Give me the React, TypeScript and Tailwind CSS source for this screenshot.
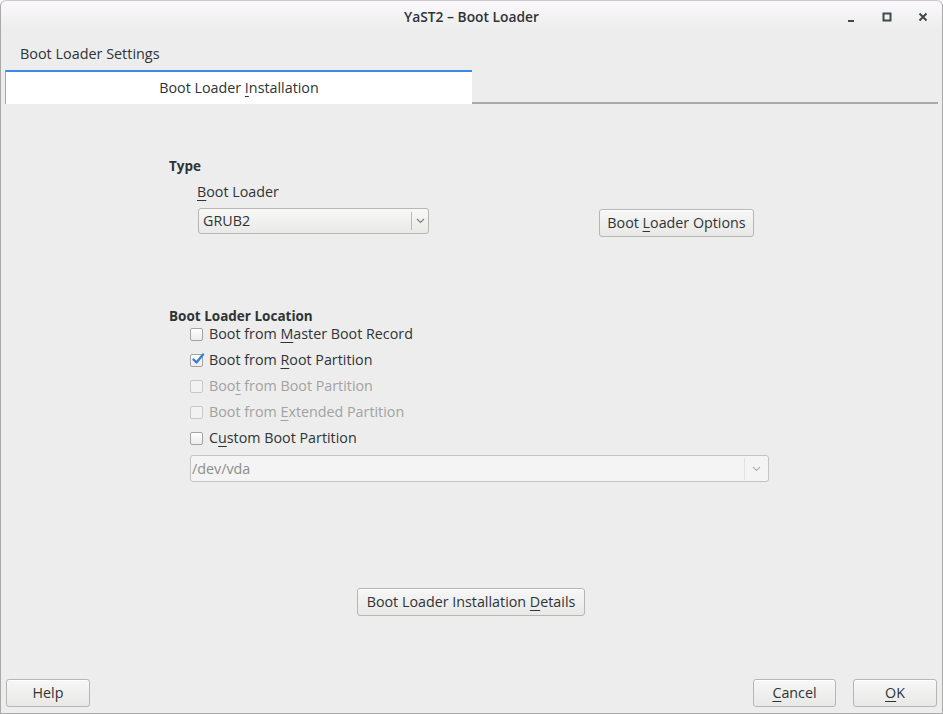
import React from "react";

const font = { fontFamily: '"Open Sans", "Noto Sans", sans-serif' };

function Mn({ children }: { children: React.ReactNode }) {
  return <span className="underline underline-offset-[3px] decoration-1">{children}</span>;
}

function Button({ children, className = "" }: { children: React.ReactNode; className?: string }) {
  return (
    <button
      className={`h-[28px] whitespace-nowrap rounded-[3px] border border-[#b6b6b3] bg-gradient-to-b from-[#f7f7f7] to-[#e8e8e7] px-0 text-[14.3px] text-[#2e3436] shadow-[inset_0_1px_0_#ffffff] ${className}`}
    >
      {children}
    </button>
  );
}

function Chevron({ color = "#7c7f7c" }: { color?: string }) {
  return (
    <svg width="9" height="6" viewBox="0 0 9 6">
      <path d="M1 1 L4.5 4.5 L8 1" fill="none" stroke={color} strokeWidth="1.2" />
    </svg>
  );
}

function Check({ label, checked = false, disabled = false }: { label: React.ReactNode; checked?: boolean; disabled?: boolean }) {
  return (
    <div className="flex h-[26px] items-center">
      <div
        className={`relative h-[13px] w-[13px] rounded-[2px] border ${
          disabled ? "border-[#c8c8c6] bg-[#f2f2f2]" : "border-[#a3a3a1] bg-gradient-to-b from-[#ffffff] to-[#ececec]"
        }`}
      >
        {checked && (
          <svg className="absolute left-[0px] top-[-3px]" width="14" height="14" viewBox="0 0 14 14">
            <path d="M2.5 7.5 L5.5 10.5 L12 2.5" fill="none" stroke="#3a7fd0" strokeWidth="2.4" strokeLinecap="round" strokeLinejoin="round" />
          </svg>
        )}
      </div>
      <span className={`ml-[6px] text-[14.3px] ${disabled ? "text-[#a1a3a0]" : "text-[#2e3436]"}`}>{label}</span>
    </div>
  );
}

export default function App() {
  return (
    <div style={font} className="flex h-[714px] w-[943px] flex-col overflow-hidden rounded-t-[6px] border border-t-0 border-[#a9a9a9] bg-[#ededed] text-[#2e3436]">
      {/* title bar */}
      <div className="relative flex h-[33px] shrink-0 items-center justify-center rounded-t-[6px] border-t border-[#c9c9c9] bg-gradient-to-b from-[#fbf8fb] to-[#ececec]">
        <span className="text-[13.8px] font-semibold text-[#2e3436]">YaST2 – Boot Loader</span>
        <div className="absolute right-[14px] top-[10px] flex items-center gap-[26px]">
          <svg width="10" height="12" viewBox="0 0 10 12"><rect x="2" y="9" width="6" height="2" fill="#3f4a4d" /></svg>
          <svg width="10" height="12" viewBox="0 0 10 12"><rect x="1.5" y="2.5" width="7" height="7" fill="none" stroke="#3f4a4d" strokeWidth="2" /></svg>
          <svg width="10" height="12" viewBox="0 0 10 12"><path d="M1.5 2.5 L8.5 9.5 M8.5 2.5 L1.5 9.5" stroke="#3f4a4d" strokeWidth="2" /></svg>
        </div>
      </div>

      {/* header */}
      <div className="pl-[19px] pt-[11px] text-[14.4px] leading-[20px]">Boot Loader Settings</div>

      {/* tab bar */}
      <div className="mt-[6px] flex pl-[4px] pr-[4px]">
        <div className="flex h-[34px] w-[467px] items-center justify-center border-l border-[#a6a6a6] border-t-2 border-t-[#3b8ae0] bg-white text-[14.3px]">
          <span>
            Boot Loader <Mn>I</Mn>nstallation
          </span>
        </div>
        <div className="flex-1 self-end border-b-2 border-[#a8a8a8]" />
      </div>

      {/* content */}
      <div className="flex flex-1 flex-col pl-[168px]">
        <div className="mt-[53px] text-[13.5px] font-bold leading-[18px]">Type</div>
        <div className="ml-[28px] mt-[8px] text-[14.3px] leading-[18px]">
          <Mn>B</Mn>oot Loader
        </div>
        <div className="mt-[7px] flex items-start">
          <div className="ml-[29px] flex h-[26px] w-[231px] items-center rounded-[3px] border border-[#b6b6b3] bg-gradient-to-b from-[#f8f8f8] to-[#e9e9e8]">
            <span className="flex-1 pl-[4px] text-[14.3px]">GRUB2</span>
            <div className="flex h-[18px] w-[17px] items-center justify-center border-l border-[#b9b9b7]">
              <Chevron />
            </div>
          </div>
          <Button className="ml-[170px] mt-[1px] w-[155px]">
            Boot <Mn>L</Mn>oader Options
          </Button>
        </div>

        <div className="mt-[70px] text-[13.5px] font-bold leading-[18px]">Boot Loader Location</div>
        <div className="-mt-[4px] ml-[21px] flex flex-col">
          <Check label={<>Boot from <Mn>M</Mn>aster Boot Record</>} />
          <Check checked label={<>Boot from <Mn>R</Mn>oot Partition</>} />
          <Check disabled label={<>Boo<Mn>t</Mn> from Boot Partition</>} />
          <Check disabled label={<>Boot from <Mn>E</Mn>xtended Partition</>} />
          <Check label={<>C<Mn>u</Mn>stom Boot Partition</>} />
          <div className="mt-[4px] flex h-[27px] w-[579px] items-center rounded-[3px] border border-[#c4c4c2] bg-[#f4f4f4]">
            <span className="flex-1 pl-[1px] text-[14.3px] text-[#8b8e8b]">/dev/vda</span>
            <div className="flex h-[22px] w-[24px] items-center justify-center border-l border-[#e2e2e2]">
              <Chevron color="#b1b3b0" />
            </div>
          </div>
        </div>

        <div className="mt-[106px] pl-[188px]">
          <Button className="w-[228px]">
            Boot Loader Installation <Mn>D</Mn>etails
          </Button>
        </div>
      </div>

      {/* bottom buttons */}
      <div className="flex items-center pb-[6px] pl-[5px] pr-[5px]">
        <Button className="w-[84px]">Help</Button>
        <div className="flex-1" />
        <Button className="w-[83px]">
          <Mn>C</Mn>ancel
        </Button>
        <Button className="ml-[17px] w-[84px]">
          <Mn>O</Mn>K
        </Button>
      </div>
    </div>
  );
}
